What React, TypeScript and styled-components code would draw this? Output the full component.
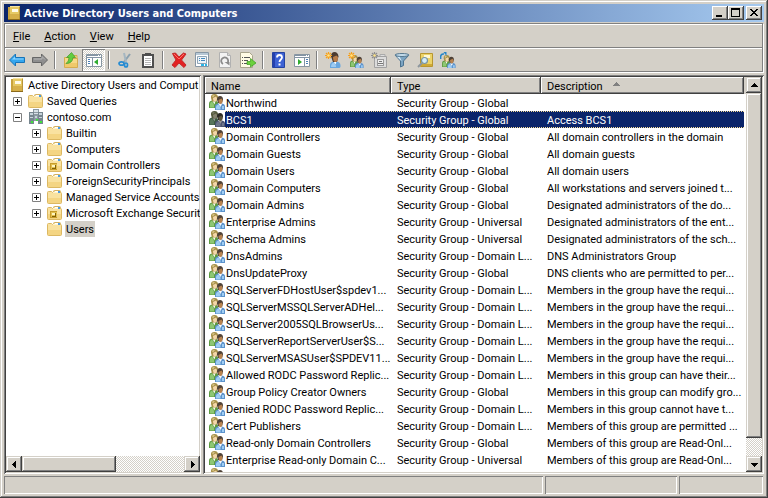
import React from "react";
import styled, { createGlobalStyle, css } from "styled-components";

const face = "#d4d0c8";
const shade = "#808080";
const dark = "#404040";
const navy = "#0a246a";
const dither = `conic-gradient(#fff 25%, ${face} 0 50%, #fff 0 75%, ${face} 0) 0 0 / 2px 2px`;

const GlobalStyle = createGlobalStyle`
  * { box-sizing: border-box; }
  body { margin: 0; background: ${face}; }
  body, button, table { font: 11px/16px Tahoma, Roboto, sans-serif; color: #000; }
  button { padding: 0; border: 0; background: none; }
  svg { display: block; flex: none; }
`;

const raised = css`
  background: ${face};
  box-shadow: inset -1px -1px ${dark}, inset 1px 1px #fff, inset -2px -2px ${shade};
`;
const raisedSoft = css`
  background: ${face};
  box-shadow: inset -1px -1px ${dark}, inset 1px 1px ${face}, inset -2px -2px ${shade}, inset 2px 2px #fff;
`;

const Window = styled.div`
  display: flex;
  flex-direction: column;
  height: 100vh;
  padding: 4px;
  background: ${face};
  box-shadow: inset -1px -1px ${dark}, inset 1px 1px ${face}, inset -2px -2px ${shade}, inset 2px 2px #fff;
`;
const TitleBar = styled.header`
  display: flex;
  align-items: center;
  height: 18px;
  padding: 0 2px;
  background: linear-gradient(90deg, ${navy}, #a6caf0);
`;
const Title = styled.h1`
  flex: 1;
  margin: 0 0 0 2px;
  font: bold 11px/18px Tahoma, "DejaVu Sans Condensed", "DejaVu Sans", sans-serif;
  font-stretch: condensed;
  padding-top: 1px;
  color: #fff;
  white-space: nowrap;
`;
const CaptionButton = styled.button<{ $apart?: boolean }>`
  ${raised}
  display: grid;
  place-items: center;
  width: 16px;
  height: 14px;
  margin-left: ${(p) => (p.$apart ? 2 : 0)}px;
`;
const Bars = styled.div`
  margin: 1px 1px 0 0;
  border: 1px solid ${shade};
  box-shadow: inset 1px 1px #fff, 1px 1px #fff;
`;
const MenuBar = styled.nav`
  display: flex;
  align-items: center;
  height: 23px;
  padding: 2px 0 0 1px;
`;
const MenuItem = styled.button`
  padding: 0 7px;
  &::first-letter { text-decoration: underline; }
`;
const ToolBar = styled.div`
  display: flex;
  height: 24px;
  border-top: 1px solid ${shade};
  box-shadow: inset 0 1px #fff;
  padding-top: 1px;
`;
const Tool = styled.button<{ $pressed?: boolean }>`
  display: grid;
  place-items: center;
  width: 23px;
  height: 22px;
  padding-left: 1px;
  ${(p) => p.$pressed && css`
    background: ${dither};
    box-shadow: inset 1px 1px ${shade}, inset -1px -1px #fff;
  `}
`;
const Separator = styled.span`
  width: 2px;
  height: 18px;
  margin: 2px 3px;
  border-left: 1px solid ${shade};
  border-right: 1px solid #fff;
`;
const Main = styled.main`
  flex: 1;
  min-height: 0;
  display: grid;
  grid-template-columns: 197px minmax(0, 1fr);
  gap: 2px;
  margin-top: 3px;
`;
const Pane = styled.section`
  display: flex;
  min-width: 0;
  min-height: 0;
  padding: 2px;
  background: #fff;
  box-shadow: inset 1px 1px ${shade}, inset -1px -1px #fff, inset 2px 2px ${dark}, inset -2px -2px ${face};
`;
const TreePane = styled(Pane)`
  flex-direction: column;
  padding-right: 1px;
`;
const Tree = styled.ul`
  flex: 1;
  min-height: 0;
  margin: 0;
  padding: 0;
  overflow: hidden;
  list-style: none;
`;
const Node = styled.li<{ $level: number }>`
  display: flex;
  align-items: center;
  height: 16px;
  padding-left: ${(p) => (p.$level ? p.$level * 19 - 16 : 3)}px;
  white-space: nowrap;
`;
const ExpandSlot = styled.span`
  display: grid;
  place-items: center;
  flex: none;
  width: 16px;
  margin-right: 3px;
`;
const Expander = styled.button`
  width: 9px;
  height: 9px;
`;
const NodeLabel = styled.span<{ $selected?: boolean }>`
  margin-left: 2px;
  padding: 2px 1px 0;
  line-height: 14px;
  background: ${(p) => (p.$selected ? face : "transparent")};
`;
const ScrollBar = styled.div<{ $vertical?: boolean }>`
  display: flex;
  flex: none;
  flex-direction: ${(p) => (p.$vertical ? "column" : "row")};
  ${(p) => (p.$vertical ? "width: 16px;" : "height: 16px;")}
  background: ${dither};
`;
const ScrollButton = styled.button`
  ${raisedSoft}
  display: grid;
  place-items: center;
  flex: none;
  width: 16px;
  height: 16px;
`;
const Track = styled.div<{ $vertical?: boolean }>`
  display: flex;
  flex: 1;
  flex-direction: ${(p) => (p.$vertical ? "column" : "row")};
`;
const Thumb = styled.div<{ $share: number }>`
  ${raisedSoft}
  flex: 0 0 ${(p) => p.$share}%;
`;
const ListView = styled.div`
  flex: 1;
  min-width: 0;
  overflow: hidden;
  background: linear-gradient(${face} 17px, #fff 0);
`;
const Table = styled.table`
  width: calc(100% - 2px);
  table-layout: fixed;
  border-collapse: collapse;
`;
const Col = styled.col<{ $width?: number }>`
  ${(p) => p.$width && `width: ${p.$width}px;`}
`;
const HeadCell = styled.th`
  padding: 0;
  font-weight: normal;
`;
const HeadButton = styled.button`
  ${raised}
  display: flex;
  align-items: center;
  gap: 9px;
  width: 100%;
  height: 17px;
  padding: 3px 6px 0;
  text-align: left;
  svg { align-self: flex-start; }
`;
const Cell = styled.td`
  height: 17px;
  padding: 3px 0 0 6px;
  line-height: 14px;
  overflow: hidden;
  white-space: nowrap;
`;
const NameCell = styled(Cell)`
  padding: 0 0 0 4px;
`;
const NameBox = styled.div`
  display: flex;
`;
const NameText = styled.span`
  flex: 1;
  height: 17px;
  padding: 3px 0 0 1px;
`;
const Row = styled.tr<{ $selected?: boolean }>`
  ${(p) => p.$selected && css`
    color: #fff;
    ${NameText}, ${Cell}:not(${NameCell}) {
      background:
        repeating-linear-gradient(90deg, #f5db95 0 1px, ${navy} 1px 2px) top / 100% 1px no-repeat,
        repeating-linear-gradient(90deg, #f5db95 0 1px, ${navy} 1px 2px) bottom / 100% 1px no-repeat,
        ${navy};
    }
    svg { filter: brightness(0.6) saturate(0.6) hue-rotate(20deg); }
  `}
`;
const StatusBar = styled.footer`
  display: grid;
  grid-template-columns: minmax(0, 1fr) 132px 84px;
  gap: 2px;
  height: 18px;
  margin: 2px 1px 0 0;
`;
const StatusPane = styled.div`
  box-shadow: inset 1px 1px ${shade}, inset -1px -1px #fff;
`;

const Svg = ({ children }: { children: React.ReactNode }) => (
  <svg width="16" height="16" viewBox="0 0 16 16" aria-hidden="true">{children}</svg>
);

const BookIcon = () => (
  <Svg>
    <path d="M2 2h2v12H2z" fill="#c9a33c" />
    <path d="M4 1h10v13H4z" fill="#e6c964" />
    <path d="M2 14h12v1H2z" fill="#8d6b1c" />
    <path d="M13 2h1v12h-1z" fill="#b8953a" />
    <path d="M4 1h9v1H4z" fill="#f6e3a2" />
    <path d="M6 4h6v3H6z" fill="#fffbe8" />
    <path d="M4 9h9v5H4z" fill="#d6b04a" />
  </Svg>
);
const FolderIcon = ({ unit }: { unit?: boolean }) => (
  <Svg>
    <path d="M6.500 2.500q0-1 1-1h5q1 0 1 1V5h-7z" fill="#f4dc98" stroke="#d3b060" />
    <path d="M8 2h4v1H8z" fill="#fff" />
    <path d="M11 2h2v1h-2z" fill="#4a9be0" />
    <path d="M.5 3.500q0-1 1-1h3l1 1h8q1 0 1 1v9q0 1-1 1h-12q-1 0-1-1z" fill="#f9e2a0" stroke="#dcb862" />
    <path d="M1 9h13v5H1z" fill="#f4d583" />
    <path d="M6 3h7v1H6z" fill="#fff3cf" />
    <path d="M11 3h2v1h-2z" fill="#4a9be0" />
    {unit && (
      <>
        <path d="M3 6h7v7H3z" fill="#c79c2a" />
        <path d="M4 7h6v5H4z" fill="#e2c050" />
        <path d="M5 8h3v2H5z" fill="#fff5bf" />
        <path d="M8 8h1v4H5v-1h3z" fill="#806008" />
      </>
    )}
  </Svg>
);
const DomainIcon = () => (
  <Svg>
    <path d="M5 0h6v12H5z" fill="#8d9aa3" />
    <path d="M6 1h4v2H6zM6 4h4v1H6z" fill="#d9e2e8" />
    <path d="M1 3h5v12H1zM10 3h5v12h-5z" fill="#77868f" />
    <path d="M2 4h3v2H2zM11 4h3v2h-3zM2 8h3v1H2zM11 8h3v1h-3zM7 7h2v2H7z" fill="#c8d4db" />
    <path d="M3 12h2v2H3zM12 12h2v2h-2zM8 10h2v2H8z" fill="#3ee23a" />
  </Svg>
);
const GroupShape = () => (
  <>
    <path d="M0 14V9.500Q0 7 3 6.500h4l2 2V14z" fill="#5d9b41" />
    <path d="M1 13.500V10q0-2 2-2.500l2 3v3z" fill="#8ec773" />
    <path d="M3.500 7h3l-1 3.500z" fill="#f5f8ee" />
    <path d="M2 4Q1.500 0 5.500 0T9 4.500L7.500 7.500H3z" fill="#a8914a" />
    <path d="M4 4l3-1.500L8 4q0 3.500-1.800 3.500Q4 7.500 4 4z" fill="#f3d6a8" />
    <path d="M3 2q1-1.500 3-1L4 3.500z" fill="#d9c789" />
    <path d="M6 16v-3.500Q6 10 9 9.500h4q3 .5 3 3V16z" fill="#5c93cc" />
    <path d="M7 15.500V13q0-2 2.500-2.500l2 3v2zM13 12h2v3h-2z" fill="#9fcdf3" />
    <path d="M9.500 10H13l-1.500 3z" fill="#f4f8fb" />
    <path d="M8 5.500Q8 2 11 2t3 3.500L13 9H9z" fill="#4e4136" />
    <path d="M9.500 6l3-1.500 1 1.500q0 4-2 4t-2-4z" fill="#b8834f" />
  </>
);
const GroupIcon = () => <Svg><GroupShape /></Svg>;
const Burst = ({ color = "#f7a11b" }: { color?: string }) => (
  <>
    <path d="M3.500 0v7M0 3.500h7M1 1l5 5M6 1L1 6" stroke={color} strokeWidth="1.200" />
    <circle cx="3.500" cy="3.500" r="1.300" fill="#ffe58a" />
  </>
);
const Arrow = ({ right }: { right?: boolean }) => (
  <Svg>
    {right ? (
      <>
        <path d="M15.500 8L9.500 2v3.500H.5v5h9V14z" fill="#8f8f8f" stroke="#666" />
        <path d="M2 7h8V4.500L13 7.500" fill="none" stroke="#b5b5b5" />
      </>
    ) : (
      <>
        <path d="M.5 8L6.500 2v3.500h9v5h-9V14z" fill="#35a7ef" stroke="#1874b8" />
        <path d="M3 7.500l3-3V6.500h8.500v1z" fill="#8fd6ff" />
      </>
    )}
  </Svg>
);
const ConsoleIcon = ({ right }: { right?: boolean }) => (
  <Svg>
    <path d="M.5 2.500h15v12H.5z" fill="#fff" stroke="#8796a2" />
    <path d="M1 3h14v1H1zM1 5h14v1H1z" fill="#8394a4" />
    <path d="M12 3h1v1h-1zM14 3h1v1h-1z" fill="#fff" />
    {right ? (
      <>
        <path d="M10 6h1v8h-1z" fill="#8394a4" />
        <path d="M4 7l4 3-4 3z" fill="#30ac2e" />
        <path d="M12 7h2v1h-2zM12 9h2v1h-2zM12 11h2v1h-2z" fill="#4b7fb5" />
      </>
    ) : (
      <>
        <path d="M6 6h1v8H6z" fill="#8394a4" />
        <path d="M12 7l-4 3 4 3z" fill="#30ac2e" />
        <path d="M2 7h2v1H2zM2 9h2v1H2zM2 11h2v1H2z" fill="#4b7fb5" />
      </>
    )}
  </Svg>
);
const UpFolderIcon = () => (
  <Svg>
    <path d="M9 3.500h5v3H9zM1.500 5.500h5l1 1h7v9h-13z" fill="#f7d987" stroke="#d5ac50" />
    <path d="M2 11h12v4H2z" fill="#f0c96a" />
    <path d="M3 11.500q3-2 3-6H3.500L8.500.5l4 5H10q-.5 6-7 6z" fill="#62cd40" stroke="#3c9a28" strokeWidth=".7" />
  </Svg>
);
const CutIcon = () => (
  <Svg>
    <path d="M13 2L7 10" stroke="#8ba0ae" strokeWidth="2" />
    <path d="M7 1l2 9" stroke="#a5b6c1" strokeWidth="2" />
    <ellipse cx="4.500" cy="11.500" rx="2.500" ry="1.700" fill="none" stroke="#268bd2" strokeWidth="1.700" />
    <ellipse cx="9" cy="13" rx="1.500" ry="2" fill="none" stroke="#268bd2" strokeWidth="1.700" />
  </Svg>
);
const ClipboardIcon = () => (
  <Svg>
    <path d="M3 3h10v12H3z" fill="#fff" stroke="#4f4f4f" strokeWidth="2" />
    <path d="M5 1h6v3H5z" fill="#4f4f4f" />
    <path d="M5 6.500h6M5 8.500h6M5 10.500h6M5 12.500h6" stroke="#b5b5b5" />
  </Svg>
);
const DeleteIcon = () => (
  <Svg>
    <path d="M1.500 1.500L4.500 1 8 5l4.500-4L15 2l-4.500 6 4.500 5-2 2.500L8 11l-4 4.500L1 13l4-5z" fill="#e32222" stroke="#c22b2b" />
    <path d="M3 2l5 5 5-5" fill="none" stroke="#ff7167" />
  </Svg>
);
const PropertiesIcon = () => (
  <Svg>
    <path d="M1.500.5h13v14h-13z" fill="#fff" stroke="#8797a5" />
    <path d="M2 1h12v2H2z" fill="#b7c8d5" />
    <path d="M3.500 4.500h9v7h-9z" fill="#eef4f9" stroke="#8fa4b4" />
    <path d="M5 6h1v1H5zM7 6h4v1H7zM5 8h1v1H5zM7 8h4v1H7z" fill="#4389bd" />
    <path d="M7 12h3v2H7zM11 12h2v2h-2z" fill="#2bb5e6" />
  </Svg>
);
const RefreshIcon = () => (
  <Svg>
    <path d="M2.500.5h8l3 3v12h-11z" fill="#f3f3f3" stroke="#b1b1b1" />
    <path d="M10.500.5v3h3" fill="#d4d4d4" stroke="#b1b1b1" />
    <path d="M6 12A3.500 3.500 0 1 1 10.500 11" fill="none" stroke="#8b8b8b" strokeWidth="1.800" />
    <path d="M7.500 10h5v3.500z" fill="#8b8b8b" />
  </Svg>
);
const ExportIcon = () => (
  <Svg>
    <path d="M.5.5h9l3 3v12H.5z" fill="#fffbe4" stroke="#a9a48c" />
    <path d="M2 5h1v1H2zM2 8h1v1H2zM2 11h1v1H2zM4 5h6v1H4zM4 8h4v1H4zM4 11h3v1H4z" fill="#555" />
    <path d="M7 9.500h3.500V6.500L16 11l-5.500 4v-2.500H7z" fill="#6bd13d" stroke="#3a9c1f" strokeWidth=".7" />
  </Svg>
);
const HelpIcon = () => (
  <Svg>
    <path d="M1.500.5h12v15h-12z" fill="#3d62d4" stroke="#2443a0" />
    <path d="M2 1h2v14H2z" fill="#243fae" />
    <path d="M6 5.500q0-2.500 2.500-2.500T11 5.500C11 7.500 8.500 7.500 8.500 10" fill="none" stroke="#fff" strokeWidth="1.800" />
    <path d="M7.500 11.500h2v2h-2z" fill="#fff" />
  </Svg>
);
const NewUserIcon = () => (
  <Svg>
    <path d="M5 16v-3q0-3 3.500-3.500h3q4 .5 4 4V15l-1 1z" fill="#69a7df" />
    <path d="M6 15q0-4 3-4.500l2 3V15z" fill="#9dcbf2" />
    <path d="M8.500 9.500h3l-1 3z" fill="#fff" />
    <path d="M6 4.500Q6 0 9.500 0t4 4.500L12 10H8z" fill="#4c3b30" />
    <path d="M8 5l3.500-1.500L13 5q0 5-2.500 5Q8 10 8 5z" fill="#b97c47" />
    <Burst />
  </Svg>
);
const NewGroupIcon = () => (
  <Svg>
    <g transform="translate(2 3) scale(.85)"><GroupShape /></g>
    <Burst />
  </Svg>
);
const NewUnitIcon = () => (
  <Svg>
    <path d="M9 2.500h5v3H9z" fill="#ddd" stroke="#aaa" />
    <path d="M3.500 4.500h12v11h-12z" fill="#dcdcdc" stroke="#a1a1a1" />
    <path d="M6 7h7v7H6z" fill="#9a9a9a" />
    <path d="M7 8h5v5H7z" fill="#eee" />
    <path d="M8 9h3v1H8zM7 11h5v1H7z" fill="#777" />
    <Burst color="#8d8d8d" />
  </Svg>
);
const FilterIcon = () => (
  <Svg>
    <path d="M1 3l5.500 6v6l3-1.500V9L15 3z" fill="#7ba4c2" stroke="#4b718e" />
    <path d="M2.500 4.500L7.500 9v4V8.500l-2-4z" fill="#d5eaf7" />
    <ellipse cx="8" cy="3" rx="7" ry="1.500" fill="#c5dceb" stroke="#55788f" />
  </Svg>
);
const FindIcon = () => (
  <Svg>
    <path d="M3.500 1.500h12v13h-12z" fill="#ecd368" stroke="#b8962f" />
    <path d="M7 3h6v3H7z" fill="#fff8d2" />
    <path d="M4 12h11v2H4z" fill="#cfa936" />
    <path d="M1 15l4-4" stroke="#8d969d" strokeWidth="2" />
    <circle cx="7.500" cy="8.500" r="3" fill="#d4edf9" stroke="#7893a2" strokeWidth="1.200" />
  </Svg>
);
const AddToGroupIcon = () => (
  <Svg>
    <g transform="translate(2 3) scale(.85)"><GroupShape /></g>
    <path d="M.7 7Q0 1.500 4 2" fill="none" stroke="#2585c7" strokeWidth="1.500" />
    <path d="M3.500 0h3v4z" fill="#2585c7" />
  </Svg>
);
const BoxIcon = ({ open }: { open?: boolean }) => (
  <svg width="9" height="9" viewBox="0 0 9 9" aria-hidden="true">
    <path d="M.5.5h8v8h-8z" fill="#fff" stroke="#808080" />
    <path d={open ? "M2 4h5v1H2z" : "M2 4h5v1H2zM4 2h1v5H4z"} />
  </svg>
);
const arrows = {
  up: "M4 2h1v1h1v1h1v1h1v1H1V5h1V4h1V3h1z",
  down: "M1 3h7v1H7v1H6v1H5v1H4V6H3V5H2V4H1z",
  left: "M6 1v7H5V7H4V6H3V5H2V4h1V3h1V2h1V1z",
  right: "M3 1v7h1V7h1V6h1V5h1V4H6V3H5V2H4V1z",
};
const Triangle = ({ to, color = "#000" }: { to: keyof typeof arrows; color?: string }) => (
  <svg width="9" height="9" viewBox="0 0 9 9" fill={color} shapeRendering="crispEdges" aria-hidden="true">
    <path d={arrows[to]} />
  </svg>
);
const captionPaths = {
  Minimize: "M2 7h6v2H2z",
  Maximize: "M1 0h9v9H1zM2 2v6h7V2z",
  Close: "M2 1h2v1h1v1h2V2h1V1h2v1H9v1H8v1H7v1h1v1h1v1h1v1H8V7H7V6H5v1H4v1H2V7h1V6h1V5h1V4H4V3H3V2H2z",
};

const tools: { label: string; icon: React.ReactNode; pressed?: boolean }[][] = [
  [{ label: "Back", icon: <Arrow /> }, { label: "Forward", icon: <Arrow right /> }],
  [
    { label: "Up one level", icon: <UpFolderIcon /> },
    { label: "Show console tree", icon: <ConsoleIcon />, pressed: true },
  ],
  [{ label: "Cut", icon: <CutIcon /> }, { label: "Paste", icon: <ClipboardIcon /> }],
  [
    { label: "Delete", icon: <DeleteIcon /> },
    { label: "Properties", icon: <PropertiesIcon /> },
    { label: "Refresh", icon: <RefreshIcon /> },
    { label: "Export list", icon: <ExportIcon /> },
  ],
  [{ label: "Help topics", icon: <HelpIcon /> }, { label: "Show action pane", icon: <ConsoleIcon right /> }],
  [
    { label: "New user", icon: <NewUserIcon /> },
    { label: "New group", icon: <NewGroupIcon /> },
    { label: "New organizational unit", icon: <NewUnitIcon /> },
    { label: "Filter", icon: <FilterIcon /> },
    { label: "Find", icon: <FindIcon /> },
    { label: "Add to a group", icon: <AddToGroupIcon /> },
  ],
];

type TreeNode = { label: string; level: number; icon: React.ReactNode; state?: "open" | "closed"; selected?: boolean };
const nodes: TreeNode[] = [
  { label: "Active Directory Users and Comput", level: 0, icon: <BookIcon /> },
  { label: "Saved Queries", level: 1, icon: <FolderIcon />, state: "closed" },
  { label: "contoso.com", level: 1, icon: <DomainIcon />, state: "open" },
  { label: "Builtin", level: 2, icon: <FolderIcon />, state: "closed" },
  { label: "Computers", level: 2, icon: <FolderIcon />, state: "closed" },
  { label: "Domain Controllers", level: 2, icon: <FolderIcon unit />, state: "closed" },
  { label: "ForeignSecurityPrincipals", level: 2, icon: <FolderIcon />, state: "closed" },
  { label: "Managed Service Accounts", level: 2, icon: <FolderIcon />, state: "closed" },
  { label: "Microsoft Exchange Securit", level: 2, icon: <FolderIcon unit />, state: "closed" },
  { label: "Users", level: 2, icon: <FolderIcon />, selected: true },
];

const G = "Security Group - Global";
const U = "Security Group - Universal";
const L = "Security Group - Domain L...";
const groups: [string, string, string][] = [
  ["Northwind", G, ""],
  ["BCS1", G, "Access BCS1"],
  ["Domain Controllers", G, "All domain controllers in the domain"],
  ["Domain Guests", G, "All domain guests"],
  ["Domain Users", G, "All domain users"],
  ["Domain Computers", G, "All workstations and servers joined t..."],
  ["Domain Admins", G, "Designated administrators of the do..."],
  ["Enterprise Admins", U, "Designated administrators of the ent..."],
  ["Schema Admins", U, "Designated administrators of the sch..."],
  ["DnsAdmins", L, "DNS Administrators Group"],
  ["DnsUpdateProxy", G, "DNS clients who are permitted to per..."],
  ["SQLServerFDHostUser$spdev1...", L, "Members in the group have the requi..."],
  ["SQLServerMSSQLServerADHel...", L, "Members in the group have the requi..."],
  ["SQLServer2005SQLBrowserUs...", L, "Members in the group have the requi..."],
  ["SQLServerReportServerUser$S...", L, "Members in the group have the requi..."],
  ["SQLServerMSASUser$SPDEV11...", L, "Members in the group have the requi..."],
  ["Allowed RODC Password Replic...", L, "Members in this group can have their..."],
  ["Group Policy Creator Owners", G, "Members in this group can modify gro..."],
  ["Denied RODC Password Replic...", L, "Members in this group cannot have t..."],
  ["Cert Publishers", L, "Members of this group are permitted ..."],
  ["Read-only Domain Controllers", G, "Members of this group are Read-Onl..."],
  ["Enterprise Read-only Domain C...", U, "Members of this group are Read-Onl..."],
  ["", "", ""],
];

export default function App() {
  return (
    <Window>
      <GlobalStyle />
      <TitleBar>
        <BookIcon />
        <Title>Active Directory Users and Computers</Title>
        {(["Minimize", "Maximize", "Close"] as const).map((name) => (
          <CaptionButton key={name} aria-label={name} $apart={name === "Close"}>
            <svg width="12" height="10" viewBox="0 0 12 10" fillRule="evenodd" shapeRendering="crispEdges" aria-hidden="true">
              <path d={captionPaths[name]} />
            </svg>
          </CaptionButton>
        ))}
      </TitleBar>
      <Bars>
        <MenuBar>
          {["File", "Action", "View", "Help"].map((m) => <MenuItem key={m}>{m}</MenuItem>)}
        </MenuBar>
        <ToolBar>
          {tools.map((set, i) => (
            <React.Fragment key={i}>
              {i > 0 && <Separator />}
              {set.map((t) => (
                <Tool key={t.label} aria-label={t.label} aria-pressed={t.pressed} $pressed={t.pressed}>{t.icon}</Tool>
              ))}
            </React.Fragment>
          ))}
        </ToolBar>
      </Bars>
      <Main>
        <TreePane>
          <Tree>
            {nodes.map((n) => (
              <Node key={n.label} $level={n.level}>
                {n.level > 0 && (
                  <ExpandSlot>
                    {n.state && (
                      <Expander aria-label={`${n.state === "open" ? "Collapse" : "Expand"} ${n.label}`}>
                        <BoxIcon open={n.state === "open"} />
                      </Expander>
                    )}
                  </ExpandSlot>
                )}
                {n.icon}
                <NodeLabel $selected={n.selected}>{n.label}</NodeLabel>
              </Node>
            ))}
          </Tree>
          <ScrollBar>
            <ScrollButton aria-label="Scroll left"><Triangle to="left" /></ScrollButton>
            <Track><Thumb $share={58} /></Track>
            <ScrollButton aria-label="Scroll right"><Triangle to="right" /></ScrollButton>
          </ScrollBar>
        </TreePane>
        <Pane>
          <ListView>
            <Table>
              <colgroup><Col $width={186} /><Col $width={150} /><Col /></colgroup>
              <thead>
                <tr>
                  <HeadCell><HeadButton>Name</HeadButton></HeadCell>
                  <HeadCell><HeadButton>Type</HeadButton></HeadCell>
                  <HeadCell aria-sort="ascending">
                    <HeadButton>Description <Triangle to="up" color="#808080" /></HeadButton>
                  </HeadCell>
                </tr>
              </thead>
              <tbody>
                {groups.map(([name, type, description], i) => (
                  <Row key={i} $selected={name === "BCS1"}>
                    <NameCell><NameBox><GroupIcon /><NameText>{name}</NameText></NameBox></NameCell>
                    <Cell>{type}</Cell>
                    <Cell>{description}</Cell>
                  </Row>
                ))}
              </tbody>
            </Table>
          </ListView>
          <ScrollBar $vertical>
            <ScrollButton aria-label="Scroll up"><Triangle to="up" /></ScrollButton>
            <Track $vertical><Thumb $share={95} /></Track>
            <ScrollButton aria-label="Scroll down"><Triangle to="down" /></ScrollButton>
          </ScrollBar>
        </Pane>
      </Main>
      <StatusBar><StatusPane /><StatusPane /><StatusPane /></StatusBar>
    </Window>
  );
}
